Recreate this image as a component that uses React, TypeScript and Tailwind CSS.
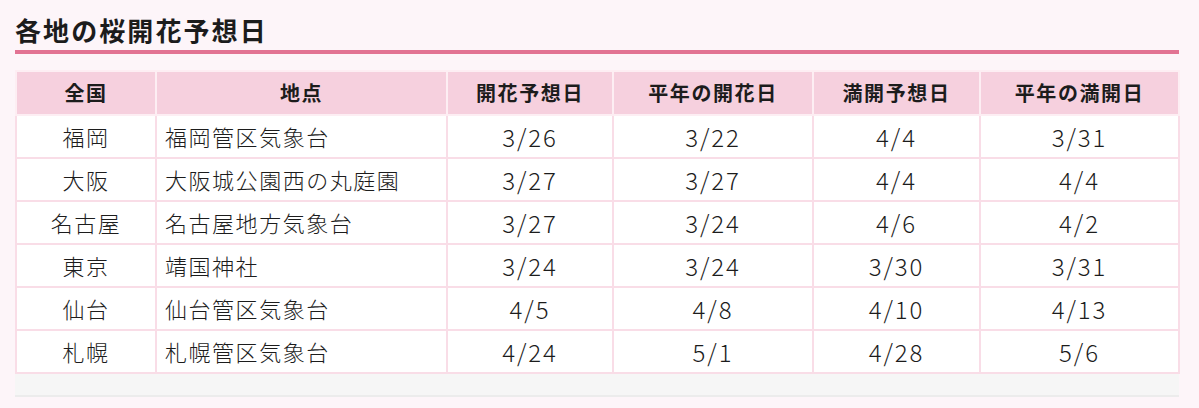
import React from "react";

const rows = [
  ["福岡", "福岡管区気象台", "3/26", "3/22", "4/4", "3/31"],
  ["大阪", "大阪城公園西の丸庭園", "3/27", "3/27", "4/4", "4/4"],
  ["名古屋", "名古屋地方気象台", "3/27", "3/24", "4/6", "4/2"],
  ["東京", "靖国神社", "3/24", "3/24", "3/30", "3/31"],
  ["仙台", "仙台管区気象台", "4/5", "4/8", "4/10", "4/13"],
  ["札幌", "札幌管区気象台", "4/24", "5/1", "4/28", "5/6"],
];

const heads = ["全国", "地点", "開花予想日", "平年の開花日", "満開予想日", "平年の満開日"];
const widths = ["w-[140px]", "w-[291px]", "w-[166px]", "w-[200px]", "w-[167px]", "w-[199px]"];

export default function App() {
  return (
    <div
      className="min-h-[408px] w-full bg-[#fdf5f9] text-[#1c1c1c]"
      style={{ fontFamily: '"Noto Sans CJK JP", "Noto Sans", sans-serif' }}
    >
      <div className="ml-[15px] w-[1164px] pt-[11px]">
        <h2 className="h-[37px] text-[26px] leading-[37px] font-bold tracking-[0.08em]">
          各地の桜開花予想日
        </h2>
        <div className="mt-[2px] h-[4px] bg-[#e27393]" />

        <table className="mt-[16px] w-[1163px] table-fixed border-collapse border-2 border-[#fbe6ee] bg-white">
          <thead>
            <tr className="h-[44px] bg-[#f6d0de]">
              {heads.map((h, i) => (
                <th
                  key={h}
                  className={`${widths[i]} border-2 border-[#fdeef3] text-center text-[20px] font-bold tracking-[0.08em]`}
                >
                  {h}
                </th>
              ))}
            </tr>
          </thead>
          <tbody>
            {rows.map((r) => (
              <tr key={r[0]} className="h-[43px]">
                {r.map((c, i) =>
                  i > 1 ? (
                    <td
                      key={i}
                      className="border-2 border-[#f9dde7] text-center text-[24px] font-light tracking-[0.08em]"
                    >
                      {c}
                    </td>
                  ) : (
                    <td
                      key={i}
                      className={`border-2 border-[#f9dde7] text-[22px] font-light tracking-[0.07em] ${
                        i === 1 ? "pl-[8px] text-left" : "text-center"
                      }`}
                    >
                      {c}
                    </td>
                  )
                )}
              </tr>
            ))}
          </tbody>
        </table>

        <div className="h-[23px] w-[1164px] border-b-2 border-[#ececec] bg-[#f6f6f6]" />
      </div>
    </div>
  );
}
